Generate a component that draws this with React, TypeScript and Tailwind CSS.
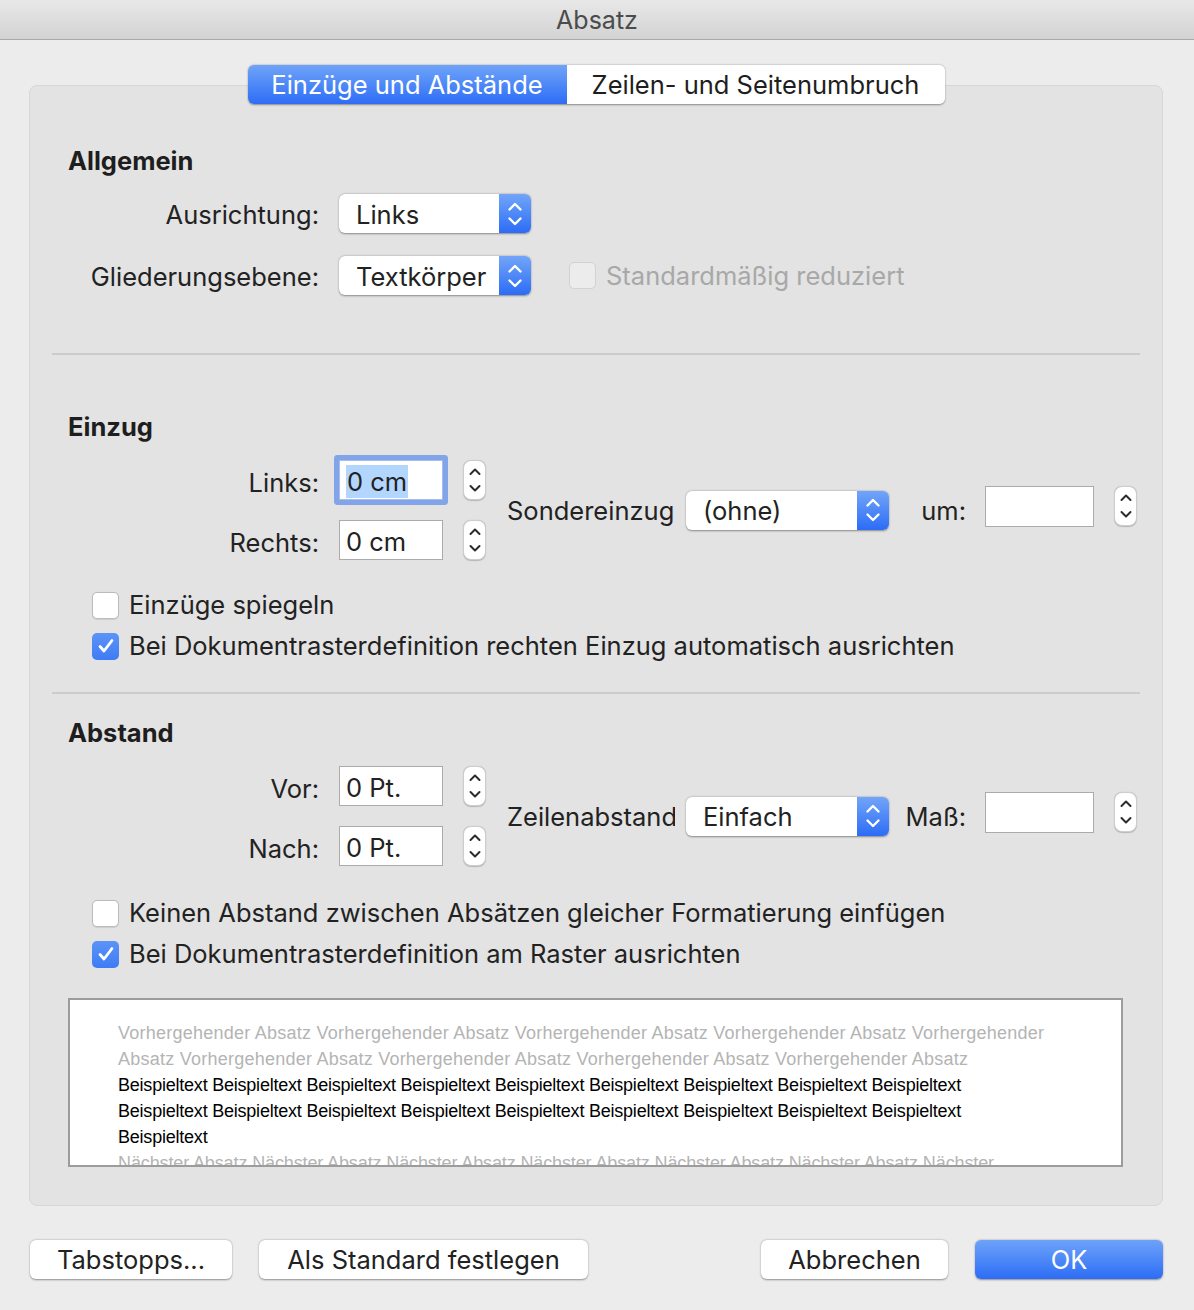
import React from 'react';

// Absatz-Dialog (macOS Word) – Einzüge und Abstände

function PopupArrows() {
  return (
    <svg width="16" height="32" viewBox="0 0 16 32" fill="none">
      <path d="M2.5 11.5 L8 6 L13.5 11.5" stroke="white" strokeWidth="2.4" strokeLinecap="round" strokeLinejoin="round" />
      <path d="M2.5 20.5 L8 26 L13.5 20.5" stroke="white" strokeWidth="2.4" strokeLinecap="round" strokeLinejoin="round" />
    </svg>
  );
}

function StepperArrows() {
  return (
    <svg width="14" height="32" viewBox="0 0 14 32" fill="none">
      <path d="M2.5 10 L7 5.5 L11.5 10" stroke="#2b2b2b" strokeWidth="2" strokeLinecap="round" strokeLinejoin="round" />
      <path d="M2.5 22 L7 26.5 L11.5 22" stroke="#2b2b2b" strokeWidth="2" strokeLinecap="round" strokeLinejoin="round" />
    </svg>
  );
}

function Popup({ value, className }: { value: string; className: string }) {
  return (
    <div className={`flex h-[39px] rounded-[6px] bg-white shadow-[0_0.5px_2px_rgba(0,0,0,0.4)] ${className}`}>
      <div className="flex flex-1 items-center pl-[17px] pt-[2px] text-[#222]">{value}</div>
      <div className="flex w-[32px] items-center justify-center rounded-r-[6px] bg-gradient-to-b from-[#72a4f8] to-[#2c6bf6]">
        <PopupArrows />
      </div>
    </div>
  );
}

function Stepper() {
  return (
    <div className="flex h-[40px] w-[23px] items-center justify-center rounded-[8px] border border-[#cdcdcd] bg-white shadow-[0_0.5px_1px_rgba(0,0,0,0.2)]">
      <StepperArrows />
    </div>
  );
}

function Field({ value, focused, className = 'w-[104px] h-[40px]' }: { value?: string; focused?: boolean; className?: string }) {
  return (
    <div
      className={`flex items-center border bg-white px-[6px] pt-[3px] text-[#222] ${className} ${
        focused ? 'rounded-[1px] border-[#a9bde8] shadow-[0_0_0_5px_#82a5e9]' : 'border-[#ababab]'
      }`}
    >
      {value &&
        (focused ? <span className="bg-[#b3d6fe] px-[1px] leading-[33px]">{value}</span> : <span>{value}</span>)}
    </div>
  );
}

function Checkbox({ checked, disabled, label }: { checked?: boolean; disabled?: boolean; label: string }) {
  return (
    <div className="flex items-center">
      {checked ? (
        <div className="flex h-[27px] w-[27px] items-center justify-center rounded-[5px] bg-gradient-to-b from-[#5c93f7] to-[#3e7cf4]">
          <svg width="20" height="20" viewBox="0 0 20 20" fill="none">
            <path d="M4 10.5 L8 15 L16 4.5" stroke="white" strokeWidth="2.8" strokeLinecap="round" strokeLinejoin="round" />
          </svg>
        </div>
      ) : (
        <div
          className={`h-[27px] w-[27px] rounded-[5px] border ${
            disabled ? 'border-[#d2d2d2] bg-[#ececec]' : 'border-[#bcbcbc] bg-white shadow-[0_0.5px_1px_rgba(0,0,0,0.1)]'
          }`}
        />
      )}
      <span className={`ml-[10px] whitespace-nowrap ${disabled ? 'text-[#a8a8a8]' : 'text-[#222]'}`}>{label}</span>
    </div>
  );
}

function Label({ children, className = '' }: { children: React.ReactNode; className?: string }) {
  return <div className={`w-[251px] shrink-0 whitespace-nowrap text-right text-[#222] ${className}`}>{children}</div>;
}

function Heading({ children, className }: { children: React.ReactNode; className: string }) {
  return <div className={`h-[32px] font-bold leading-[32px] text-[#1e1e1e] ${className}`}>{children}</div>;
}

function Button({ children, className, primary }: { children: React.ReactNode; className: string; primary?: boolean }) {
  return (
    <div
      className={`flex h-[39px] items-center justify-center rounded-[6px] shadow-[0_0.5px_2px_rgba(0,0,0,0.4)] ${
        primary ? 'bg-gradient-to-b from-[#6ea2f8] to-[#2d6cf6] text-white' : 'bg-white text-[#222]'
      } ${className}`}
    >
      {children}
    </div>
  );
}

// Zwei Zeilen (Eingabefeld + Stepper) links, Popup mittig rechts
function MeasureBlock({
  rows,
  popLabel,
  popValue,
  sideLabel,
}: {
  rows: { label: string; value: string; focused?: boolean }[];
  popLabel: string;
  popValue: string;
  sideLabel: string;
}) {
  return (
    <div className="flex items-center">
      <div className="flex flex-col gap-[20px]">
        {rows.map((r) => (
          <div key={r.label} className="flex h-[40px] items-center">
            <Label className="pt-[5px]">{r.label}</Label>
            <div className="ml-[20px]">
              <Field value={r.value} focused={r.focused} />
            </div>
            <div className="ml-[20px]">
              <Stepper />
            </div>
          </div>
        ))}
      </div>
      <div className="ml-[21px] w-[168px] overflow-hidden whitespace-nowrap pt-[2px] text-[#222]">{popLabel}</div>
      <Popup value={popValue} className="ml-[11px] w-[203px]" />
      <div className="w-[77px] whitespace-nowrap pt-[2px] text-right text-[#222]">{sideLabel}</div>
      <div className="ml-[19px] -mt-[8px]">
        <Field className="h-[41px] w-[109px]" />
      </div>
      <div className="ml-[20px] -mt-[8px]">
        <Stepper />
      </div>
    </div>
  );
}

const previewLines = [
  {
    text: 'Vorhergehender Absatz Vorhergehender Absatz Vorhergehender Absatz Vorhergehender Absatz Vorhergehender',
    cls: 'tracking-[0.24px] text-[#b4b4b4]',
  },
  {
    text: 'Absatz Vorhergehender Absatz Vorhergehender Absatz Vorhergehender Absatz Vorhergehender Absatz',
    cls: 'tracking-[0.24px] text-[#b4b4b4]',
  },
  {
    text: 'Beispieltext Beispieltext Beispieltext Beispieltext Beispieltext Beispieltext Beispieltext Beispieltext Beispieltext',
    cls: 'tracking-[-0.22px] text-black',
  },
  {
    text: 'Beispieltext Beispieltext Beispieltext Beispieltext Beispieltext Beispieltext Beispieltext Beispieltext Beispieltext',
    cls: 'tracking-[-0.22px] text-black',
  },
  { text: 'Beispieltext', cls: 'tracking-[-0.22px] text-black' },
  {
    text: 'Nächster Absatz Nächster Absatz Nächster Absatz Nächster Absatz Nächster Absatz Nächster Absatz Nächster',
    cls: 'tracking-[-0.12px] text-[#b4b4b4]',
  },
];

export default function App() {
  return (
    <div className="h-[1310px] w-[1194px] overflow-hidden bg-[#ececec] font-['Inter','Noto_Sans',sans-serif] text-[25.5px] leading-[32px]">
      {/* Titelleiste */}
      <div className="flex h-[40px] items-center justify-center border-b border-[#a9a9a9] bg-gradient-to-b from-[#e8e8e8] to-[#d3d3d3] text-[25px] text-[#4b4b4b]">
        Absatz
      </div>

      {/* Gruppenrahmen */}
      <div className="ml-[29px] mt-[45px] h-[1121px] w-[1134px] rounded-[8px] border border-[#d7d7d7] bg-[#e3e3e3]">
        {/* Tabs */}
        <div className="-mt-[21px] flex justify-center">
          <div className="flex h-[39px] rounded-[6px] shadow-[0_0.5px_2px_rgba(0,0,0,0.4)]">
            <div className="flex w-[319px] items-center justify-center rounded-l-[6px] bg-gradient-to-b from-[#6fa3f8] to-[#2e6cf6] text-white">
              Einzüge und Abstände
            </div>
            <div className="flex w-[378px] items-center justify-center rounded-r-[6px] bg-white text-[#1e1e1e]">
              Zeilen- und Seitenumbruch
            </div>
          </div>
        </div>

        <div className="px-[22px]">
          {/* Allgemein */}
          <div className="pl-[16px]">
            <Heading className="mt-[41px]">Allgemein</Heading>
            <div className="mt-[17px] flex h-[39px] items-center">
              <Label className="pt-[2px]">Ausrichtung:</Label>
              <Popup value="Links" className="ml-[20px] w-[192px]" />
            </div>
            <div className="mt-[23px] flex h-[39px] items-center">
              <Label className="pt-[2px]">Gliederungsebene:</Label>
              <Popup value="Textkörper" className="ml-[20px] w-[192px]" />
              <div className="ml-[38px]">
                <Checkbox disabled label="Standardmäßig reduziert" />
              </div>
            </div>
          </div>

          <div className="mt-[58px] h-[2px] bg-[#cbcbcb]" />

          {/* Einzug */}
          <div className="pl-[16px]">
            <Heading className="mt-[56px]">Einzug</Heading>
            <div className="mt-[17px]">
              <MeasureBlock
                rows={[
                  { label: 'Links:', value: '0 cm', focused: true },
                  { label: 'Rechts:', value: '0 cm' },
                ]}
                popLabel="Sondereinzug"
                popValue="(ohne)"
                sideLabel="um:"
              />
            </div>
            <div className="mt-[29px] flex flex-col gap-[9px] pl-[24px]">
              <Checkbox label="Einzüge spiegeln" />
              <Checkbox checked label="Bei Dokumentrasterdefinition rechten Einzug automatisch ausrichten" />
            </div>
          </div>

          <div className="mt-[30px] h-[2px] bg-[#cbcbcb]" />

          {/* Abstand */}
          <div className="pl-[16px]">
            <Heading className="mt-[23px]">Abstand</Heading>
            <div className="mt-[17px]">
              <MeasureBlock
                rows={[
                  { label: 'Vor:', value: '0 Pt.' },
                  { label: 'Nach:', value: '0 Pt.' },
                ]}
                popLabel="Zeilenabstand"
                popValue="Einfach"
                sideLabel="Maß:"
              />
            </div>
            <div className="mt-[31px] flex flex-col gap-[9px] pl-[24px]">
              <Checkbox label="Keinen Abstand zwischen Absätzen gleicher Formatierung einfügen" />
              <Checkbox checked label="Bei Dokumentrasterdefinition am Raster ausrichten" />
            </div>

            {/* Vorschau */}
            <div className="mt-[28px] h-[169px] w-[1055px] overflow-hidden border-2 border-[#9c9c9c] bg-white pl-[48px] pt-[20px] font-['Liberation_Sans',sans-serif] text-[18px] leading-[26px]">
              {previewLines.map((l, i) => (
                <div key={i} className={`whitespace-nowrap ${l.cls}`}>
                  {l.text}
                </div>
              ))}
            </div>
          </div>
        </div>
      </div>

      {/* Schaltflächen */}
      <div className="ml-[30px] mt-[34px] flex w-[1133px] items-center">
        <Button className="w-[202px]">Tabstopps...</Button>
        <Button className="ml-[27px] w-[329px]">Als Standard festlegen</Button>
        <div className="flex-1" />
        <Button className="w-[187px]">Abbrechen</Button>
        <Button primary className="ml-[27px] w-[188px]">
          OK
        </Button>
      </div>
    </div>
  );
}
